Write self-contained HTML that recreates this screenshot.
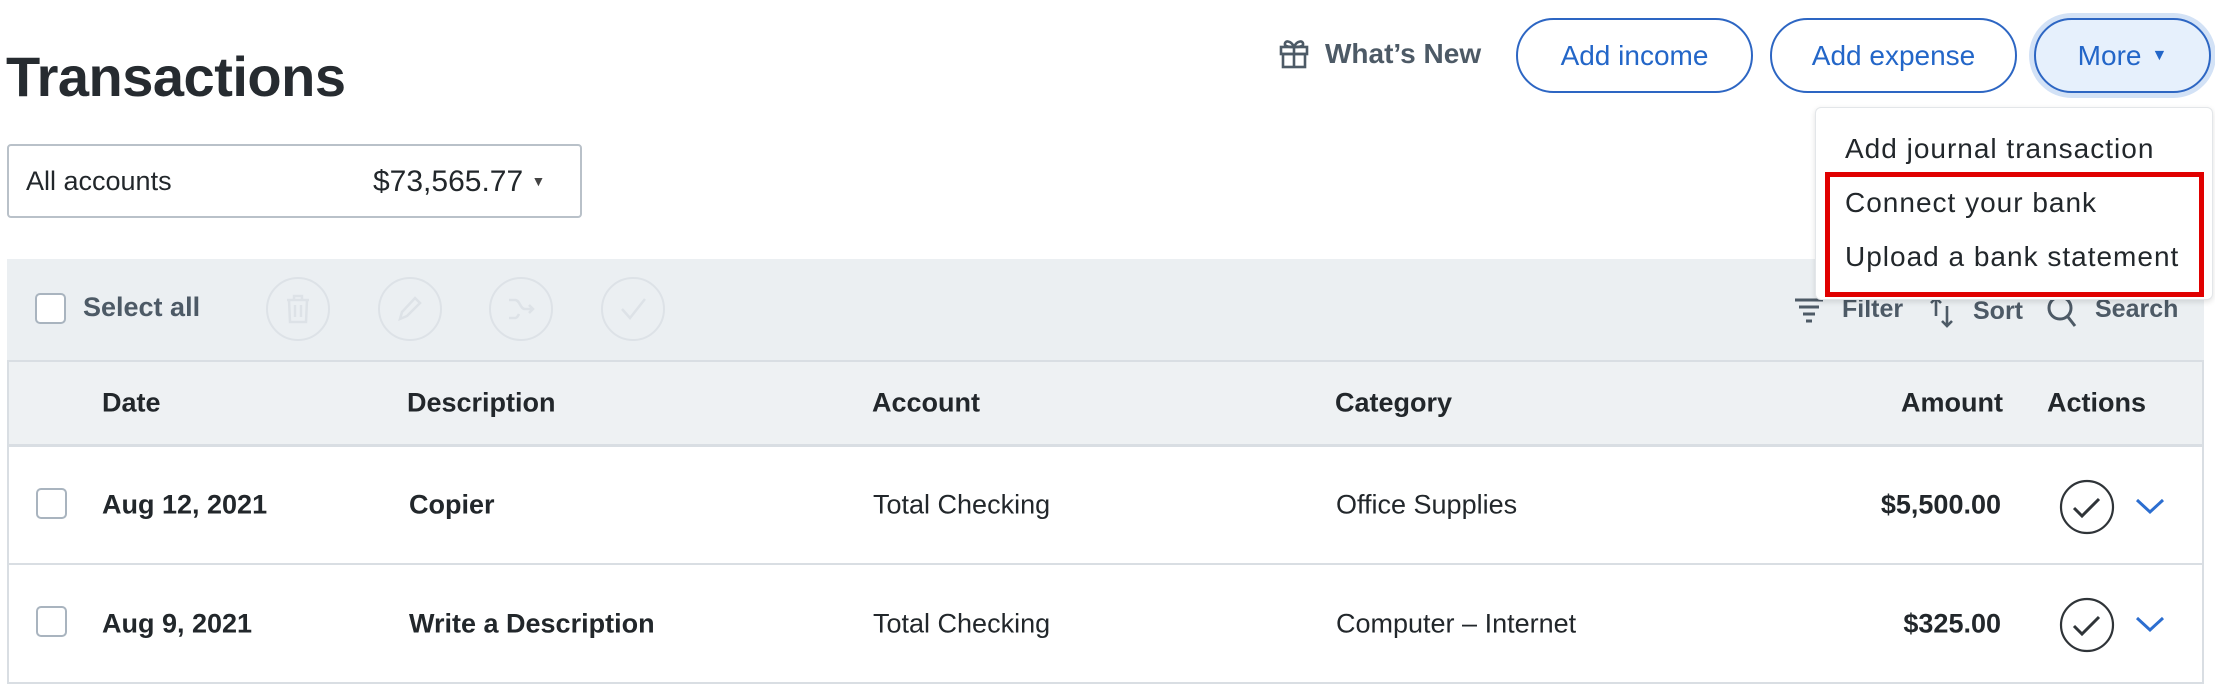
<!DOCTYPE html>
<html><head><meta charset="utf-8"><style>
*{margin:0;padding:0;box-sizing:border-box}
body{width:2215px;height:686px;background:#fff;position:relative;overflow:hidden;font-family:"Liberation Sans",sans-serif;color:#22272b}
.a{position:absolute;white-space:nowrap}
.btn{position:absolute;border:2px solid #2d66c3;border-radius:38px;color:#2366c8;font-size:28px;display:flex;align-items:center;justify-content:center;background:#fff}
.row{position:absolute;left:7px;width:2197px;border-left:2px solid #d9dee3;border-right:2px solid #d9dee3;border-bottom:2px solid #d9dee3}
.cb{position:absolute;width:31px;height:31px;border:2px solid #a9b4bf;border-radius:5px;background:#fff}
.t{font-size:27px;top:50%;transform:translateY(-50%)}
.b{font-weight:bold}
.ic{position:absolute;width:64px;height:64px;border:2px solid #dde2e7;border-radius:50%;top:277px}
.dd{font-size:28px;color:#22272b;letter-spacing:1px}
</style></head><body>
<div class="a" style="left:6px;top:44px;font-size:56px;font-weight:bold;color:#262b30;letter-spacing:-0.5px">Transactions</div>

<svg class="a" style="left:1278px;top:37px" width="32" height="32" viewBox="0 0 32 32" fill="none" stroke="#4d5a66" stroke-width="2.6"><rect x="3" y="10" width="26" height="7"/><rect x="5" y="17" width="22" height="13"/><line x1="16" y1="10" x2="16" y2="30"/><path d="M16 10c-3-7-10-7-9-2 1 2 6 2 9 2zM16 10c3-7 10-7 9-2-1 2-6 2-9 2z"/></svg>
<div class="a" style="left:1325px;top:38px;font-size:28px;font-weight:bold;color:#4d5a66">What’s New</div>

<div class="btn" style="left:1516px;top:18px;width:237px;height:75px">Add income</div>
<div class="btn" style="left:1770px;top:18px;width:247px;height:75px">Add expense</div>
<div class="btn" style="left:2034px;top:18px;width:177px;height:75px;background:#e6f0fc;box-shadow:0 0 0 5px #d3e2f6">More <span style="font-size:16px;margin-left:10px">▼</span></div>

<div class="a" style="left:7px;top:144px;width:575px;height:74px;border:2px solid #b9c1c9;border-radius:4px"></div>
<div class="a" style="left:26px;top:166px;font-size:27px">All accounts</div>
<div class="a" style="left:373px;top:165px;font-size:30px">$73,565.77 <span style="font-size:14px;position:relative;top:-5px;color:#444">▼</span></div>

<div class="a" style="left:7px;top:259px;width:2197px;height:101px;background:#ebeff2"></div>
<div class="cb" style="left:35px;top:293px"></div>
<div class="a" style="left:83px;top:292px;font-size:27px;color:#4d5a66;font-weight:bold">Select all</div>
<div class="ic" style="left:266px"></div><div class="ic" style="left:378px"></div><div class="ic" style="left:489px"></div><div class="ic" style="left:601px"></div>
<svg class="a" style="left:283px;top:293px" width="30" height="32" viewBox="0 0 30 32" fill="none" stroke="#dde2e7" stroke-width="2.5"><path d="M4 7h22M11 7V3h8v4M6 7l1 22h16l1-22M12 12v12M18 12v12"/></svg>
<svg class="a" style="left:395px;top:294px" width="30" height="30" viewBox="0 0 30 30" fill="none" stroke="#dde2e7" stroke-width="2.5"><path d="M5 25l2-7L20 4l5 5L12 22z"/></svg>
<svg class="a" style="left:506px;top:296px" width="30" height="26" viewBox="0 0 30 26" fill="none" stroke="#dde2e7" stroke-width="2.5"><path d="M3 4h6c5 0 5 9 10 9h8M23 9l4 4-4 4M3 22h6c2 0 3-2 4-4"/></svg>
<svg class="a" style="left:618px;top:296px" width="30" height="26" viewBox="0 0 30 26" fill="none" stroke="#dde2e7" stroke-width="2.5"><path d="M4 13l8 9L27 3"/></svg>

<svg class="a" style="left:1794px;top:297px" width="30" height="26" viewBox="0 0 30 26" fill="none" stroke="#4d5a66" stroke-width="3"><path d="M1 3h28M5 10h20M9 17h12M12 24h6"/></svg>
<div class="a" style="left:1842px;top:295px;font-size:25px;font-weight:bold;color:#4d5a66">Filter</div>
<svg class="a" style="left:1928px;top:296px" width="28" height="32" viewBox="0 0 28 32" fill="none" stroke="#4d5a66" stroke-width="2.6"><path d="M8 20V2M3 7l5-5 5 5M19 10v20M14 25l5 5 5-5"/></svg>
<div class="a" style="left:1973px;top:297px;font-size:25px;font-weight:bold;color:#4d5a66">Sort</div>
<svg class="a" style="left:2046px;top:294px" width="32" height="34" viewBox="0 0 32 34" fill="none" stroke="#4d5a66" stroke-width="3"><circle cx="14" cy="14" r="11"/><path d="M22 23l7 9"/></svg>
<div class="a" style="left:2095px;top:295px;font-size:25px;font-weight:bold;color:#4d5a66">Search</div>

<div class="row" style="top:360px;height:87px;background:#eef1f3;border-top:2px solid #d9dee3;border-bottom:3px solid #d9dee3">
<div class="a t b" style="left:93px">Date</div>
<div class="a t b" style="left:398px">Description</div>
<div class="a t b" style="left:863px">Account</div>
<div class="a t b" style="left:1326px">Category</div>
<div class="a t b" style="right:199px">Amount</div>
<div class="a t b" style="left:2038px">Actions</div>
</div>

<div class="row" style="top:447px;height:118px">
<div class="cb" style="left:27px;top:41px"></div>
<div class="a t b" style="left:93px">Aug 12, 2021</div>
<div class="a t b" style="left:400px">Copier</div>
<div class="a t" style="left:864px">Total Checking</div>
<div class="a t" style="left:1327px">Office Supplies</div>
<div class="a t b" style="right:201px">$5,500.00</div>
<svg class="a" style="left:2050px;top:32px" width="56" height="56" viewBox="0 0 56 56" fill="none" stroke="#2f3438" stroke-width="2.2"><circle cx="28" cy="28" r="26"/><path d="M15 29l8 8 17-17" stroke-width="3"/></svg>
<svg class="a" style="left:2126px;top:50px" width="30" height="18" viewBox="0 0 30 18" fill="none" stroke="#2c6ed0" stroke-width="3"><path d="M2 3l13 12L28 3"/></svg>
</div>

<div class="row" style="top:565px;height:119px">
<div class="cb" style="left:27px;top:41px"></div>
<div class="a t b" style="left:93px">Aug 9, 2021</div>
<div class="a t b" style="left:400px">Write a Description</div>
<div class="a t" style="left:864px">Total Checking</div>
<div class="a t" style="left:1327px">Computer – Internet</div>
<div class="a t b" style="right:201px">$325.00</div>
<svg class="a" style="left:2050px;top:32px" width="56" height="56" viewBox="0 0 56 56" fill="none" stroke="#2f3438" stroke-width="2.2"><circle cx="28" cy="28" r="26"/><path d="M15 29l8 8 17-17" stroke-width="3"/></svg>
<svg class="a" style="left:2126px;top:50px" width="30" height="18" viewBox="0 0 30 18" fill="none" stroke="#2c6ed0" stroke-width="3"><path d="M2 3l13 12L28 3"/></svg>
</div>

<div class="a" style="left:1815px;top:107px;width:398px;height:193px;background:#fff;border:1px solid #e3e6e9;border-radius:6px;box-shadow:0 2px 6px rgba(0,0,0,.12)"></div>
<div class="a dd" style="left:1845px;top:133px">Add journal transaction</div>
<div class="a" style="left:1825px;top:172px;width:379px;height:125px;border:5px solid #e00000"></div>
<div class="a dd" style="left:1845px;top:187px">Connect your bank</div>
<div class="a dd" style="left:1845px;top:241px">Upload a bank statement</div>
</body></html>
